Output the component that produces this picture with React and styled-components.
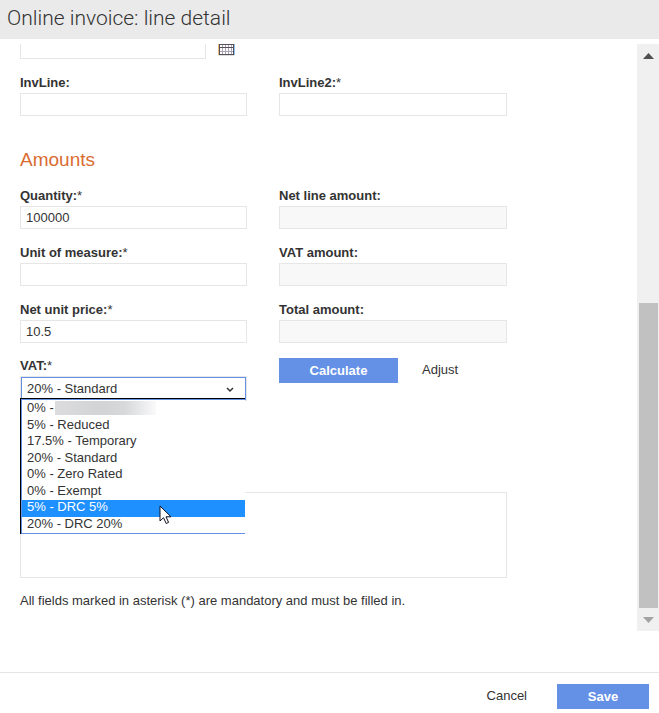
import React, { useState } from "react";
import styled, { createGlobalStyle, css } from "styled-components";

const line = "#e6e6e6";
const blue = "#6491e6";
const ink = "#333333";

const GlobalStyle = createGlobalStyle`
  *, *::before, *::after { box-sizing: border-box; }
  body {
    margin: 0;
    background: #fff;
    color: ${ink};
    font: 13px/16px "Liberation Sans", Arial, sans-serif;
  }
  input, select, textarea, button { font: inherit; color: inherit; margin: 0; border-radius: 0; outline: none; }
`;

const Page = styled.div`
  display: flex;
  flex-direction: column;
  min-height: 100vh;
`;

const Header = styled.header`
  height: 39px;
  padding: 0 7px;
  background: #eaeaea;
`;

const Title = styled.h1`
  margin: 0;
  font: 300 21px/37px Roboto, sans-serif;
  color: #333;
`;

const Body = styled.div`
  display: flex;
  flex: 1;
  margin: 5px 0 41px;
`;

const Content = styled.main`
  flex: 1;
  min-width: 0;
  overflow: hidden;
  padding: 0 20px;
`;

const Form = styled.form`
  max-width: 487px;
`;

const DateRow = styled.div`
  display: flex;
  gap: 12px;
  max-width: 215px;
  margin-top: -8px;
`;

const Grid = styled.div`
  display: grid;
  grid-template-columns: 227fr 228fr;
  column-gap: 32px;
  row-gap: 16px;
  margin-top: ${(p) => p.$top || 0}px;
`;

const Field = styled.div`
  display: flex;
  flex-direction: column;
  gap: 2px;
  min-width: 0;
`;

const Label = styled.label`
  font-weight: bold;
`;

const Star = styled.span`
  font-weight: normal;
`;

const TextInput = styled.input`
  width: 100%;
  height: 23px;
  padding: 0 5px;
  border: 1px solid ${line};
  background: ${(p) => (p.readOnly ? "#f8f8f8" : "#fff")};
`;

const IconButton = styled.button`
  display: flex;
  align-items: flex-end;
  flex: none;
  width: 17px;
  height: 20px;
  padding: 0;
  border: 0;
  background: none;
`;

const Heading = styled.h2`
  margin: 32px 0 17px;
  font-size: 19px;
  line-height: 23px;
  font-weight: normal;
  color: #d96c32;
`;

const Picker = styled.div`
  position: relative;
  border: 1px solid ${line};
`;

const Select = styled.select`
  display: block;
  appearance: none;
  width: 100%;
  height: 23px;
  padding: 0 5px;
  border: 1px solid ${blue};
  background: #fff;
`;

const Chevron = styled.svg`
  position: absolute;
  top: 10px;
  right: 12px;
  pointer-events: none;
`;

const Options = styled.ul`
  position: absolute;
  z-index: 1;
  top: 21px;
  left: -1px;
  right: 1px;
  display: grid;
  grid-auto-rows: 1fr;
  height: 136px;
  margin: 0;
  padding: 2px 0 1px;
  list-style: none;
  background: #fff;
  border: solid #000;
  border-width: 1px 0 0 1px;
  box-shadow: inset 1px 0 ${blue}, inset 0 1px ${blue}, inset 0 -1px ${blue};
`;

const Option = styled.li`
  display: flex;
  align-items: flex-start;
  position: relative;
  margin-left: 1px;
  padding-left: 5px;
  line-height: 14px;
  ${(p) => p.$active && css`
    background: #1e90ff;
    color: #fff;
  `}
`;

const Redacted = styled.span`
  width: 101px;
  height: 14px;
  margin-left: 1px;
  background: linear-gradient(90deg, #dcdcde, #d2d3d5 45%, #d8d9db 70%, #fafafb);
`;

const Pointer = styled.svg`
  position: absolute;
  top: 5px;
  left: 137px;
`;

const Actions = styled.div`
  display: flex;
  align-items: flex-start;
  gap: 24px;
`;

const Button = styled.button`
  height: 25px;
  padding: 0 0 ${(p) => (p.$primary ? 0 : 2)}px;
  border: 0;
  font-weight: ${(p) => (p.$primary ? "bold" : "normal")};
  color: ${(p) => (p.$primary ? "#fff" : ink)};
  background: ${(p) => (p.$primary ? blue : "none")};
  min-width: ${(p) => p.$width || 0}px;
`;

const Notes = styled.textarea`
  display: block;
  width: 100%;
  height: 86px;
  margin-top: 91px;
  border: 1px solid ${line};
  resize: none;
`;

const Hint = styled.p`
  margin: 15px 0 0;
`;

const ScrollBar = styled.div`
  display: flex;
  flex-direction: column;
  width: 22px;
  background: #f0f0f0;
`;

const ScrollArrow = styled.button`
  display: flex;
  align-items: center;
  justify-content: center;
  width: 100%;
  height: 23px;
  padding: 0;
  border: 0;
  background: none;
`;

const Track = styled.div`
  display: flex;
  align-items: flex-end;
  flex: 1;
  padding: 0 1px 0 2px;
`;

const Thumb = styled.div`
  width: 100%;
  height: 305px;
  background: #c1c1c1;
`;

const Footer = styled.footer`
  display: flex;
  justify-content: flex-end;
  gap: 30px;
  height: 41px;
  padding: 11px 10px 0;
  border-top: 1px solid ${line};
`;

const vatRates = [
  "0% -",
  "5% - Reduced",
  "17.5% - Temporary",
  "20% - Standard",
  "0% - Zero Rated",
  "0% - Exempt",
  "5% - DRC 5%",
  "20% - DRC 20%",
];

function CalendarIcon() {
  return (
    <svg width="17" height="12" viewBox="0 0 17 12" shapeRendering="crispEdges">
      <path d="M1 0H16V11H1Z" fill="#fff" />
      <path d="M4.5 1V10M7.5 1V10M10.5 1V10M13.5 1V10M1 7.5H16" stroke="#a9a5b5" />
      <path d="M1 .5H16M1 3.5H16M1 10.5H16M1.5 0V11M15.5 0V11" stroke="#56505a" />
      <path d="M.5 0V11" stroke="#e8b878" />
      <path d="M16.5 0V11" stroke="#8cc0f0" />
      <path d="M1 11.5H16" stroke="#dddddd" />
    </svg>
  );
}

function FieldLabel({ id, text, required }) {
  return (
    <Label htmlFor={id} id={`${id}-label`}>
      {text}:{required && <Star>*</Star>}
    </Label>
  );
}

function TextField({ id, text, required, ...rest }) {
  return (
    <Field>
      <FieldLabel id={id} text={text} required={required} />
      <TextInput id={id} type="text" {...rest} />
    </Field>
  );
}

function VatField() {
  const [value, setValue] = useState("20% - Standard");
  return (
    <Field>
      <FieldLabel id="vat" text="VAT" required />
      <Picker>
        <Select id="vat" value={value} onChange={(e) => setValue(e.target.value)}>
          {vatRates.map((rate) => <option key={rate}>{rate}</option>)}
        </Select>
        <Chevron width="8" height="6" viewBox="0 0 8 6" fill="none" stroke="#333" strokeWidth="1.5">
          <path d="M1 1L4 4L7 1" />
        </Chevron>
        <Options role="listbox" aria-labelledby="vat-label">
          {vatRates.map((rate, i) => (
            <Option key={rate} role="option" aria-selected={rate === value} $active={i === 6} onClick={() => setValue(rate)}>
              {rate}
              {i === 0 && <Redacted />}
              {i === 6 && (
                <Pointer width="14" height="20" viewBox="0 0 14 20">
                  <path d="M1 1V16L4.5 12.7L7.2 18.5L9.6 17.4L7 11.8H12Z" fill="#fff" stroke="#112" strokeWidth="1" />
                </Pointer>
              )}
            </Option>
          ))}
        </Options>
      </Picker>
    </Field>
  );
}

export default function App() {
  return (
    <Page>
      <GlobalStyle />
      <Header>
        <Title>Online invoice: line detail</Title>
      </Header>
      <Body>
        <Content>
          <Form id="line-form" onSubmit={(e) => e.preventDefault()}>
            <DateRow>
              <TextInput type="text" aria-label="Date" />
              <IconButton type="button" aria-label="Choose date"><CalendarIcon /></IconButton>
            </DateRow>
            <Grid $top={16}>
              <TextField id="inv-line" text="InvLine" />
              <TextField id="inv-line-2" text="InvLine2" required />
            </Grid>
            <Heading>Amounts</Heading>
            <Grid>
              <TextField id="quantity" text="Quantity" required defaultValue="100000" />
              <TextField id="net-line" text="Net line amount" readOnly />
              <TextField id="unit" text="Unit of measure" required />
              <TextField id="vat-amount" text="VAT amount" readOnly />
              <TextField id="price" text="Net unit price" required defaultValue="10.5" />
              <TextField id="total" text="Total amount" readOnly />
            </Grid>
            <Grid $top={15}>
              <VatField />
              <Actions>
                <Button type="button" $primary $width={119}>Calculate</Button>
                <Button type="button">Adjust</Button>
              </Actions>
            </Grid>
            <Notes aria-label="Notes" />
            <Hint>All fields marked in asterisk (*) are mandatory and must be filled in.</Hint>
          </Form>
        </Content>
        <ScrollBar>
          <ScrollArrow type="button" aria-label="Scroll up">
            <svg width="11" height="6" viewBox="0 0 11 6"><path d="M0 6L5.5 0L11 6Z" fill="#505050" /></svg>
          </ScrollArrow>
          <Track><Thumb /></Track>
          <ScrollArrow type="button" aria-label="Scroll down">
            <svg width="11" height="6" viewBox="0 0 11 6"><path d="M0 0L5.5 6L11 0Z" fill="#a3a3a3" /></svg>
          </ScrollArrow>
        </ScrollBar>
      </Body>
      <Footer>
        <Button type="button">Cancel</Button>
        <Button type="submit" form="line-form" $primary $width={92}>Save</Button>
      </Footer>
    </Page>
  );
}
